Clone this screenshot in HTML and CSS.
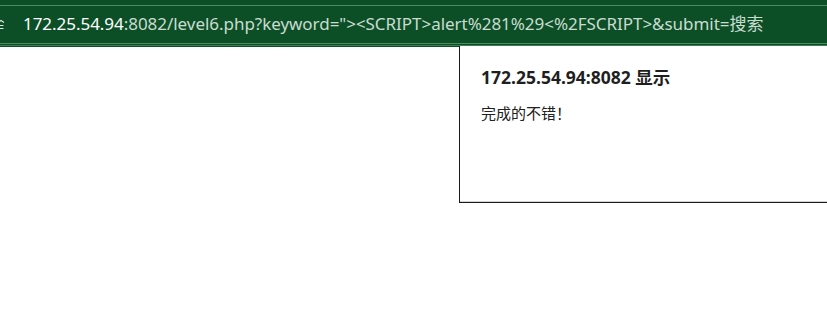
FILE: index.html
```html
<!DOCTYPE html>
<html lang="zh-CN">
<head>
<meta charset="utf-8">
<link rel="stylesheet" href="styles.css">
</head>
<body>
<div class="addressbar">
  <svg class="site-icon" width="8" height="12" viewBox="0 0 8 12">
    <path d="M0 3.5 L3 1.5 L6 3.5" fill="none" stroke="#dbe7de" stroke-width="1.2"/>
    <path d="M0 6.5 H5.5 M0 9.5 H5.5" fill="none" stroke="#dbe7de" stroke-width="1.2"/>
  </svg>
  <span class="url"><span class="host">172.25.54.94</span>:8082/level6.php?keyword="&gt;&lt;SCRIPT&gt;alert%281%29&lt;%2FSCRIPT&gt;&amp;submit=搜索</span>
</div>
<div class="page">
  <div class="dialog">
    <div class="dialog-title">172.25.54.94:8082 显示</div>
    <div class="dialog-msg">完成的不错！</div>
  </div>
</div>
</body>
</html>
```
FILE: styles.css
```css
html, body {
  margin: 0;
  padding: 0;
  background: #ffffff;
  width: 827px;
  height: 319px;
  overflow: hidden;
}
body {
  font-family: "Noto Sans", "Noto Sans CJK SC", sans-serif;
}
.addressbar {
  box-sizing: border-box;
  height: 47px;
  background: #0c4f27;
  display: flex;
  align-items: center;
  position: relative;
  box-shadow: inset 0 5px 0 #0c4f27, inset 0 6px 0 #4d8b62;
}
.addressbar::after {
  content: "";
  position: absolute;
  left: 0;
  right: 0;
  top: 43px;
  height: 1px;
  background: #4d8b62;
}
.addressbar::before {
  content: "";
  position: absolute;
  left: 0;
  right: 0;
  top: 45px;
  height: 1px;
  background: #3f7d55;
}
.site-icon {
  flex: none;
  margin-left: -2px;
  margin-top: 2px;
}
.url {
  margin-left: 17px;
  margin-top: -2px;
  font-size: 17px;
  color: #c9dccf;
  white-space: nowrap;
  letter-spacing: -0.04px;
}
.host {
  color: #ffffff;
}
.page {
  display: flex;
  justify-content: flex-end;
  padding-left: 459px;
  margin-top: -1px;
}
.dialog {
  box-sizing: border-box;
  flex: 1;
  height: 157px;
  margin-right: -20px;
  background: #ffffff;
  border-left: 1px solid #1a1a1a;
  border-bottom: 1px solid #1a1a1a;
  box-shadow: inset 0 -1px 0 #d4d4d4;
  padding: 20px 21px;
  position: relative;
}
.dialog-title {
  font-size: 17.5px;
  font-weight: 700;
  color: #1f1f1f;
  line-height: 22px;
}
.dialog-msg {
  margin-top: 15px;
  font-size: 15px;
  color: #202020;
  line-height: 20px;
}
```
